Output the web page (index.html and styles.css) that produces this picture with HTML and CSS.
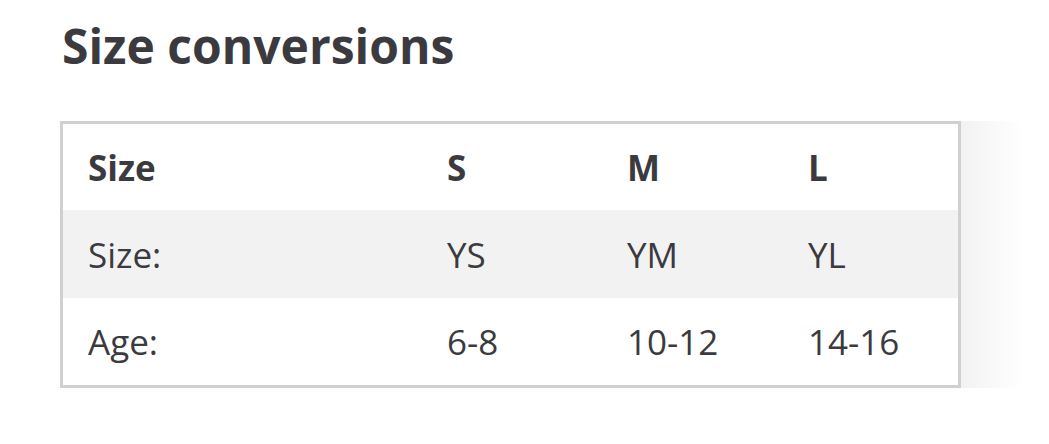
FILE: index.html
```html
<!DOCTYPE html>
<html>
<head>
<meta charset="utf-8">
<link rel="stylesheet" href="styles.css">
</head>
<body>
<div class="page">
  <h1 class="title">Size conversions</h1>
  <div class="wrap">
    <div class="table">
      <div class="row head">
        <div class="cell">Size</div><div class="cell">S</div><div class="cell">M</div><div class="cell">L</div>
      </div>
      <div class="row alt">
        <div class="cell">Size:</div><div class="cell">YS</div><div class="cell">YM</div><div class="cell">YL</div>
      </div>
      <div class="row">
        <div class="cell">Age:</div><div class="cell">6-8</div><div class="cell">10-12</div><div class="cell">14-16</div>
      </div>
    </div>
    <div class="shade"></div>
  </div>
</div>
</body>
</html>
```
FILE: styles.css
```css
html, body { margin: 0; padding: 0; background: #fff; }
body { font-family: "Open Sans", "DejaVu Sans", sans-serif; color: #3b3a3f; }
.page { padding: 14px 0 0 60px; }
.title { margin: 0 0 0 2px; font-size: 48px; font-weight: 700; line-height: 64px; height: 107px; }
.wrap { display: flex; }
.table { width: 895px; border: 3px solid #d0d0d0; }
.row { display: grid; grid-template-columns: 359px 180px 181px 1fr; padding-left: 25px; height: 87px; align-items: center; font-size: 35px; }
.row.head { font-weight: 700; height: 86px; }
.row.alt { background: #f2f2f2; height: 88px; }
.shade { width: 62px; background: linear-gradient(to right, #f2f2f2, rgba(255,255,255,0)); }
```
